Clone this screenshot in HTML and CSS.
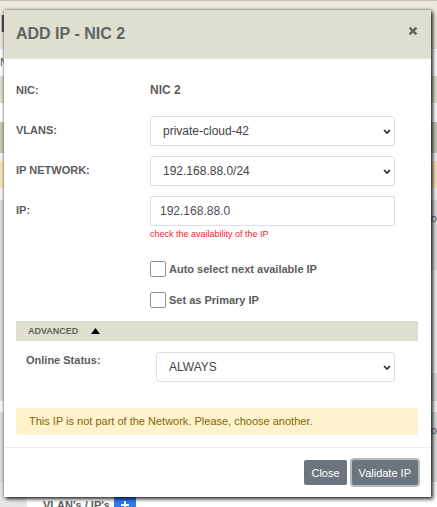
FILE: index.html
```html
<!DOCTYPE html>
<html lang="en">
<head>
    <meta charset="UTF-8">
    <meta name="viewport" content="width=device-width, initial-scale=1.0">
    <title>Add IP</title>
    <link rel="stylesheet" href="styles.css">
</head>
<body>
    <!-- page behind the dialog -->
    <main class="page">
        <div class="strip top">L</div>
        <div class="strip nic-line">N</div>
        <div class="strip heading"></div>
        <div class="strip space"></div>
        <div class="strip section"></div>
        <div class="strip gap"></div>
        <div class="strip notice"></div>
        <div class="strip margin"></div>
        <div class="strip row"><span>on</span></div>
        <div class="strip side"></div>
        <div class="strip block"></div>
        <div class="strip divide"></div>
        <div class="strip row"><span>on</span></div>
        <div class="strip ips">
            <span>VLAN's / IP's</span>
            <button type="button" class="add" aria-label="Add IP">
                <svg viewBox="0 0 8 8" width="8" height="8"><path d="M4 0v8M0 4h8" stroke="#fff" stroke-width="2"/></svg>
            </button>
        </div>
    </main>

    <div class="modal" role="dialog" aria-labelledby="title">
        <header class="modal-header">
            <h1 id="title">ADD IP - NIC 2</h1>
            <button type="button" class="dismiss" aria-label="Dismiss">
                <svg viewBox="0 0 10 10" width="10" height="10"><path d="M1.6 1.6l6.8 6.8M8.4 1.6l-6.8 6.8" stroke="#65665e" stroke-width="2.5"/></svg>
            </button>
        </header>

        <form class="modal-body">
            <div class="field nic">
                <span class="label">NIC:</span>
                <strong>NIC 2</strong>
            </div>
            <div class="field">
                <label for="vlans">VLANS:</label>
                <div class="select">
                    <select id="vlans"><option>private-cloud-42</option></select>
                    <svg viewBox="0 0 8 5" width="8" height="5"><path d="M1 1l3 3 3-3" fill="none" stroke="#222" stroke-width="1.6"/></svg>
                </div>
            </div>
            <div class="field">
                <label for="network">IP NETWORK:</label>
                <div class="select">
                    <select id="network"><option>192.168.88.0/24</option></select>
                    <svg viewBox="0 0 8 5" width="8" height="5"><path d="M1 1l3 3 3-3" fill="none" stroke="#222" stroke-width="1.6"/></svg>
                </div>
            </div>
            <div class="field">
                <label for="ip">IP:</label>
                <div>
                    <input type="text" id="ip" value="192.168.88.0">
                    <p class="hint">check the availability of the IP</p>
                </div>
            </div>
            <div class="checks">
                <label><input type="checkbox"> Auto select next available IP</label>
                <label><input type="checkbox"> Set as Primary IP</label>
            </div>

            <button type="button" class="advanced">
                ADVANCED
                <svg viewBox="0 0 9 6" width="9" height="6"><path d="M4.5 0L9 6H0z" fill="#000"/></svg>
            </button>
            <div class="field status">
                <label for="status">Online Status:</label>
                <div class="select">
                    <select id="status"><option>ALWAYS</option></select>
                    <svg viewBox="0 0 8 5" width="8" height="5"><path d="M1 1l3 3 3-3" fill="none" stroke="#222" stroke-width="1.6"/></svg>
                </div>
            </div>

            <p class="alert">This IP is not part of the Network. Please, choose another.</p>
        </form>

        <footer class="modal-footer">
            <button type="button" class="btn">Close</button>
            <button type="button" class="btn active">Validate IP</button>
        </footer>
    </div>
</body>
</html>
```

FILE: styles.css
```css
* {
  box-sizing: border-box;
}
body {
  margin: 0;
  font-family: "Liberation Sans", Arial, sans-serif;
  font-size: 11px;
  color: #5c5c5e;
  background: #fff;
  overflow: hidden;
}
button, input, select {
  font-family: inherit;
  margin: 0;
}
h1, p {
  margin: 0;
}

/* page behind the dialog */
.page {
  height: 100vh;
  overflow: hidden;
}
.strip { height: 12px; }
.top {
  height: 49px;
  padding-top: 10px;
  font-size: 24px;
  font-weight: bold;
  line-height: 26px;
  color: #4a5673;
  background: #ecebdb;
  border-top: 1px solid #c3c3bd;
}
.nic-line { height: 27px; padding-top: 7px; }
.heading { height: 27px; background: #dedfce; }
.space { height: 19px; }
.section { height: 31px; background: #c9c9b8; }
.gap { height: 8px; background: #f4f4f4; }
.notice { height: 27px; background: #f6e7b8; }
.margin { background: #f4f4f4; }
.row {
  height: 70px;
  padding-top: 12px;
  text-align: right;
  background: #dcdcdc;
}
.side {
  height: 103px;
  background: #f2f2f2;
  border-left: 27px solid #dcdcdc;
}
.block { height: 28px; background: #dcdcdc; }
.divide { height: 11px; background: #f8f8f8; }
.ips {
  display: flex;
  align-items: flex-start;
  gap: 4px;
  height: 32px;
  padding: 14px 0 0 16px;
  font-weight: bold;
  line-height: 18px;
  border-left: 27px solid #e6e6e6;
}
.add {
  display: flex;
  align-items: center;
  justify-content: center;
  width: 22px;
  height: 18px;
  padding: 0;
  border: 0;
  border-radius: 2px;
  background: #2f7bf6;
}
.row span { margin-right: -6px; }

/* dialog */
.modal {
  position: absolute;
  top: 10px;
  left: 4px;
  right: 6px;
  background: #fff;
  box-shadow: 2px 2px 4px 0 rgba(0, 0, 0, .8), 0 0 3px 0 rgba(0, 0, 0, .5);
}
.modal-header {
  display: flex;
  justify-content: space-between;
  padding: 14px 13px 14px 12px;
  background: #dedfce;
  border-bottom: 1px solid #e4e4dc;
}
.modal-header h1 {
  font-size: 16px;
  line-height: 20px;
  color: #636363;
}
.dismiss {
  width: 10px;
  height: 14px;
  padding: 0;
  border: 0;
  background: none;
}
.modal-body {
  padding: 23px 13px 12px 12px;
}
.field {
  display: grid;
  grid-template-columns: 134px 1fr;
  padding-right: 23px;
  margin-bottom: 10px;
}
.field label, .label {
  font-weight: bold;
  line-height: 16px;
  padding-top: 6px;
}
.nic {
  margin-bottom: 18px;
}
.nic .label {
  padding-top: 0;
}
.nic strong {
  font-size: 12px;
  line-height: 16px;
}
select, input[type="text"] {
  display: block;
  width: 100%;
  height: 30px;
  border: 1px solid #dcdfe6;
  border-radius: 3px;
  font-size: 12px;
  color: #495057;
  background: #fff;
}
.select {
  position: relative;
}
.select svg {
  position: absolute;
  top: 13px;
  right: 4px;
  pointer-events: none;
}
select {
  appearance: none;
  padding: 0 20px 0 12px;
  color: #444;
}
input[type="text"] {
  padding: 0 9px;
  border-radius: 0;
}
.hint {
  font-size: 9px;
  line-height: 16px;
  color: #f5222d;
}
.checks {
  display: flex;
  flex-direction: column;
  gap: 15px;
  margin: 19px 0 13px 134px;
}
.checks label {
  display: flex;
  align-items: center;
  gap: 3px;
  height: 16px;
  font-weight: bold;
}
.checks input {
  appearance: none;
  width: 16px;
  height: 16px;
  border: 1px solid #909090;
  border-radius: 2px;
  background: #fff;
}
.advanced {
  display: flex;
  align-items: center;
  gap: 13px;
  width: 100%;
  height: 20px;
  padding: 0 12px;
  border: 0;
  font-size: 9px;
  font-weight: bold;
  color: #66665f;
  background: #dedfce;
}
.status {
  grid-template-columns: 130px 1fr;
  margin: 11px 0 26px 10px;
}
.status label {
  padding-top: 0;
}
.alert {
  padding: 0 13px;
  font-size: 11px;
  line-height: 27px;
  color: #856404;
  background: #fff3cd;
  border-radius: 3px;
}
.modal-footer {
  display: flex;
  justify-content: flex-end;
  gap: 5px;
  padding: 12px 13px;
  border-top: 1px solid #e9ecef;
}
.btn {
  height: 25px;
  padding: 0 7px;
  border: 0;
  border-radius: 2px;
  font-size: 11px;
  color: #fff;
  background: #6c757d;
}
.active {
  box-shadow: 0 0 0 2px #b5babf;
}
```
